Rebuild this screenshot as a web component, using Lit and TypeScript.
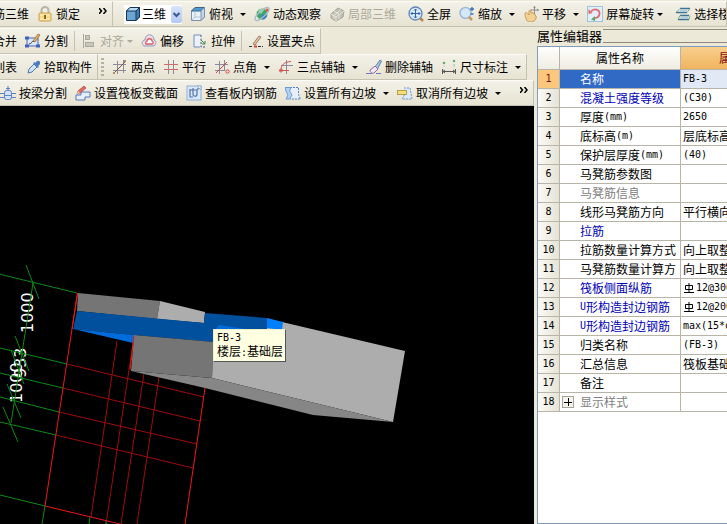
import { LitElement, html, svg, css, nothing, type TemplateResult } from "lit";
import { customElement } from "lit/decorators.js";
import { classMap } from "lit/directives/class-map.js";

const icons: Record<string, TemplateResult> = {
  lock: svg`<path d="M4.5 8V4.5a3.5 3.5 0 0 1 7 0V8" fill="none" stroke="#b9b4a6" stroke-width="2"/><rect x="2" y="7" width="12" height="8" rx="1" fill="#f6d98c" stroke="#cfa04a"/><path d="M3 9h10M3 13h10" stroke="#fdf0c4"/><rect x="7" y="9" width="2" height="4" fill="#8a6420"/>`,
  cube: svg`<path d="M1.5 5 5 1.5h9.5V11L11 14.5H1.5z" fill="#6ba6d4" stroke="#16355c"/><path d="M1.5 5H11L14.5 1.5H5z" fill="#b5dcf3" stroke="#16355c"/><path d="M11 5v9.5l3.500-3.500V1.500z" fill="#3f7db0" stroke="#16355c"/>`,
  topcube: svg`<path d="M1.500 5 5 1.500h9.500V11L11 14.500H1.500z" fill="#e9f1f8" stroke="#7b93ad"/><path d="M1.500 5H11L14.500 1.500H5z" fill="#4f9ad0" stroke="#3c6688"/><path d="M11 5v9.500l3.500-3.500V1.500z" fill="#c4d6e6" stroke="#7b93ad"/><path d="M5 6v5l-3 3M5 11h6" stroke="#b3c4d6" fill="none"/>`,
  orbit: svg`<circle cx="8" cy="8" r="5.500" fill="#3fa66a"/><path d="M4 5c2-3 5-2 6-1L7 8z" fill="#8fe0a8"/><path d="M8 9c3-2 5 0 5 1-1 3-4 4-6 3z" fill="#3a78c8"/><ellipse cx="8" cy="8" rx="9" ry="3" transform="rotate(-42 8 8)" fill="none" stroke="#a9bccd" stroke-width="1.300"/><circle cx="13" cy="4" r="1.500" fill="#e25c3a"/>`,
  local3d: svg`<path d="M2 8 9 2l6 3-1 6-7 4-5-3z" fill="#c2bfb4" stroke="#a5a297"/><path d="m2 8 5 3 8-6M7 11v4M5 5l5 3v5M12 3.500 5 9.500V13" stroke="#e9e6da" fill="none"/>`,
  full: svg`<circle cx="7.500" cy="7.500" r="6.500" fill="#dcebfb" stroke="#5d86bd" stroke-width="1.300"/><path d="m12 12 3 3" stroke="#b08a52" stroke-width="2.500"/><path d="M7.500 3v9M3 7.500h9M6 4.500 7.500 3 9 4.500M6 10.500 7.500 12 9 10.500M4.500 6 3 7.500 4.500 9M10.500 6 12 7.500 10.500 9" stroke="#2e62ad" fill="none"/>`,
  zoom: svg`<circle cx="6.500" cy="7" r="5.500" fill="#d5e8fa" stroke="#9fb8d6" stroke-width="1.500"/><path d="m10 11 3 3" stroke="#c79a5c" stroke-width="2.500"/><path d="M13 1v4M11 3h4M11.500 8h3" stroke="#3a70b5" stroke-width="1.300"/>`,
  pan: svg`<path d="M2 8c0-2 2-2 3 0l1 1V5c1-2 2-1 2 0v2c1-1 2-1 2 1 1-1 2 0 2 1l1 1c1 3-2 6-5 6H6c-2 0-4-5-4-8z" fill="#f3d193" stroke="#c39a5a"/><path d="M11.500 0v8M8 4h7.500M10.500 1.500l1-1 1 1M14 3l1.500 1L14 5" stroke="#8c8c88" fill="none"/>`,
  rotate: svg`<rect x=".5" y=".5" width="15" height="15" fill="#e2eff8" stroke="#9ec3dd"/><path d="M4 5.500c3-4 9-2 8.500 2.500-.5 3-3 4.500-5.500 4" fill="none" stroke="#e06a72" stroke-width="1.800"/><path d="M1.500 8V3l4 4z" fill="#e06a72"/><path d="M4 13.500 8 10v5z" fill="#58a868"/>`,
  floors: svg`<path d="M5 2.500h10M1 6.500h11M5 9.500h9M3 13.500h11" stroke="#3c7397" stroke-width="1.600"/><path d="M5 2.500 1 6.500M12 6.500l3-4M5 9.500l-2 4M14 13.500l1-4" stroke="#74b487"/><path d="M5 4.500h7M6 11.500h7" stroke="#a9cde8" stroke-width="1.500"/>`,
  split: svg`<rect x="2" y="5" width="11" height="8" fill="#dce8fb" stroke="#4867b5"/><path d="M0 3.500h4v3H0zM11 11.500h4v3h-4zM0 11.500h4v3H0z" fill="#3c62c0"/><path d="M4 11c3 0 2-3 5-3" stroke="#333" fill="none"/><path d="m8 8 5-7 2 1-5 7z" fill="#e8b860" stroke="#7c5c2c" stroke-width=".7"/>`,
  align: svg`<path d="M2.500 1v14" stroke="#aaa79b"/><rect x="4.500" y="2.500" width="4" height="4" fill="#c9c6ba" stroke="#aaa79b"/><rect x="4.500" y="9.500" width="8" height="4" fill="#c9c6ba" stroke="#aaa79b"/>`,
  offset: svg`<path d="M3 13c-3-1-2-6 1-6 0-7 9-7 9 0 3 1 2 6-1 6z" fill="#f3dcdf" stroke="#8e9bc4"/><path d="M5 11c-1-1 0-3 1-3 0-3 5-3 5 0 2 1 1 3 0 3z" fill="#fff" stroke="#d0606c" stroke-width="1.300"/>`,
  stretch: svg`<path d="M9 2H2v12h6" fill="#eef2f8" stroke="#6f8fc0"/><path d="M9 2v12h5" fill="none" stroke="#405a90" stroke-dasharray="2 1.500"/><path d="m9 7 4 4M13 11h-3M13 11V8" stroke="#3d8a55" fill="none"/>`,
  grip: svg`<path d="M1 13.500h4M10 13.500h5" stroke="#333" stroke-dasharray="3 1"/><path d="m5 11 6-8 2 1-6 8z" fill="#e9c2a4" stroke="#8c6c58" stroke-width=".8"/><path d="M6 13.500h3" stroke="#c94545" stroke-width="2"/>`,
  picker: svg`<path d="m3 14 1-4 5-5 3 3-5 5z" fill="#cfe4f8" stroke="#4d79ae"/><path d="m8 4 1.500-1 1 1c1-3 5-3 4.500 0 0 2-1 2-2 3l1 1L13 9z" fill="#4a7cbc"/>`,
  twopt: svg`<path d="M5.500 2v13M11.500 1v13M1 5.500h13M1 11.500h13" stroke="#8d8a9c"/><path d="M2 14 14 2" stroke="#7c5636"/><path d="M1 13h2v2H1zM12 1h2v2h-2z" fill="#b08e6d"/>`,
  parallel: svg`<path d="M5.500 1v14M10.500 1v14" stroke="#8b8ba0"/><path d="M1 5.500h14M1 10.500h14" stroke="#cf6a6a" stroke-width="1.200"/>`,
  angle: svg`<path d="M5.500 2v13M10.500 1v11M1 5.500h13M1 11.500h9" stroke="#8d8a9c"/><path d="m2 14 11-11" stroke="#c34848"/><circle cx="13.500" cy="12.500" r="1.700" fill="none" stroke="#d94545"/>`,
  arc: svg`<path d="M8.500 1v14M3 6.500h12" stroke="#8d8a9c"/><path d="M1 11.500h10M3 11c0-5 3-8 10-8.500" stroke="#d25454" fill="none"/><circle cx="3" cy="11.500" r="1.500" fill="none" stroke="#d25454"/>`,
  brush: svg`<path d="m9 8 5-7 1.500 1-4 8z" fill="#a9c8e6" stroke="#4c6c9c" stroke-width=".8"/><path d="m4 11 5-4 3 3-4 4c-2 1-4-1-4-3z" fill="#efe4f4" stroke="#8a6ca5"/><path d="M0 14.500h6M10 14.500h5" stroke="#6a7fc0"/>`,
  dims: svg`<path d="M1.500 10v5M14.500 10v5M1 12.500h14M4 11l-2 1.500L4 14M12 11l2 1.500-2 1.500" stroke="#555" fill="none"/><circle cx="3" cy="4" r="1.300" fill="#64b070"/><circle cx="13" cy="2" r="1.300" fill="#64b070"/><path d="M13 5v3M3 8V7" stroke="#9dc8a3"/>`,
  beam: svg`<path d="M0 8.500h16M0 12.500h16" stroke="#5e83c2"/><rect x="4.500" y="5.500" width="7" height="9" rx="2" fill="#d2e2f8" stroke="#5e83c2"/><path d="M8 1v5M6 3.500h4M4 10.500h8" stroke="#5e83c2"/>`,
  section: svg`<path d="M1 10h5V7h9v5h-5v3H1z" fill="#e6effc" stroke="#5476bd"/><path d="m2 9 1-3 6-5 2 2-6 5z" fill="#e8695f" stroke="#a54545" stroke-width=".7"/><path d="m2 9 1-3 2 2z" fill="#f7d9a8"/>`,
  rebar: svg`<rect x="1" y="1" width="14" height="14" fill="#d9e9fa" stroke="#8fb0d6"/><path d="M4 4v8h3M4 5h7v4c0 3-4 3-4 0V3M12 3v2" fill="none" stroke="#5272ac" stroke-width="1.200"/><path d="m11 1 4 4V1z" fill="#fff" stroke="#8fb0d6"/>`,
  slope: svg`<path d="M5 2.500h8.500v7l2 4.500H5" fill="#e6effa" stroke="#4e80c6" stroke-dasharray="2 1"/><path d="M0 2.500h6L4.500 6 7 10l-2.500 4H1l2-4-2-4z" fill="#b4d4f5" stroke="#6e9ad2"/>`,
  unslope: svg`<path d="M7 3h6l2 11H5l3-5" fill="#dceafa" stroke="#6f97cf" stroke-dasharray="2 1"/><rect x=".5" y="5.500" width="9" height="4" fill="#f5e07a" stroke="#b59f4d"/>`,
};

const icon = (name: string) => html`<svg class="icon" viewBox="0 0 16 16" aria-hidden="true">${icons[name]}</svg>`;

interface Tool { i?: string; t: string; menu?: boolean; off?: boolean; tight?: boolean }

const tool = (o: Tool) => html`<button class=${classMap({ tool: true, tight: !!o.tight })} ?disabled=${!!o.off}>
  ${o.i ? icon(o.i) : nothing}<span>${o.t}</span>${o.menu ? html`<i class="caret"></i>` : nothing}</button>`;
const sep = html`<span class="sep"></span>`;
const more = html`<button class="more" aria-label="更多"><svg width="8" height="6" viewBox="0 0 8 6"><path d="M0 0 2.500 3 0 6M4.500 0 7 3 4.500 6" fill="none" stroke="#000" stroke-width="1.500"/></svg></button>`;

/** Sets Latin runs in the half-width face used beside the ideographs. */
const mixed = (s: string) => s.split(/([\x20-\x7e]+)/).map((p, i) => (i % 2 ? html`<span class="half">${p}</span>` : p));

const barMark = html`<svg class="bar-mark" viewBox="0 0 12 12" role="img" aria-label="Φ"><path d="M6 1v10M2.500 3.500h7v4h-7zM1 10.500h10" fill="none" stroke="#000"/></svg>`;

interface Prop { n: string; v?: string; k?: "link" | "mute" | "sel"; bar?: boolean; open?: boolean }

const props: Prop[] = [
  { n: "名称", v: "FB-3", k: "sel" },
  { n: "混凝土强度等级", v: "(C30)", k: "link" },
  { n: "厚度(mm)", v: "2650" },
  { n: "底标高(m)", v: "层底标高" },
  { n: "保护层厚度(mm)", v: "(40)" },
  { n: "马凳筋参数图" },
  { n: "马凳筋信息", k: "mute" },
  { n: "线形马凳筋方向", v: "平行横向" },
  { n: "拉筋", k: "link" },
  { n: "拉筋数量计算方式", v: "向上取整+1" },
  { n: "马凳筋数量计算方", v: "向上取整+1" },
  { n: "筏板侧面纵筋", v: "12@300", k: "link", bar: true },
  { n: "U形构造封边钢筋", v: "12@200", k: "link", bar: true },
  { n: "U形构造封边钢筋", v: "max(15*d,200)", k: "link" },
  { n: "归类名称", v: "(FB-3)" },
  { n: "汇总信息", v: "筏板基础" },
  { n: "备注" },
  { n: "显示样式", k: "mute", open: true },
];

@customElement("model-view")
class ModelView extends LitElement {
  static styles = css`
    :host { display: block; position: relative; background: #000; overflow: hidden; min-height: 400px; }
    .scene { position: absolute; inset: 0; width: 100%; height: 100%; }
    .axis { stroke: #0c8a14; }
    .edge { stroke: #f01818; }
    .grid { stroke: #a00c0c; }
    .dim { fill: #fff; font: 16px "DejaVu Sans", sans-serif; }
    .tip {
      position: absolute; left: 213px; top: 223px; box-sizing: border-box; padding: 1px 2px 2px 3px;
      background: #ffffe1; border: 1px solid #eeeec8; border-right-color: #555; border-bottom-color: #555;
      font: 12px/13px "Noto Sans CJK SC", sans-serif; white-space: nowrap;
    }
    .half { font: 10px/13px "DejaVu Sans Mono", monospace; }
  `;
  render() {
    return html`
      <svg class="scene" viewBox="0 106 534 418" preserveAspectRatio="xMinYMin slice">
        <path class="grid" fill="none" d="M67 364 204 397M63 388 200 421M59 412 197 444M56 435 193 468M117 341 91 517M133 343 106 524M144 373 121 524M159 377 137 524"/>
        <path class="edge" fill="none" d="M77.500 293 45 506 120 524M205 388 185 524"/>
        <path fill="#757575" d="M78 293 160 301 157 319 77 311z"/>
        <path fill="#adadad" d="M160 301 205 312 204 323 157 319z"/>
        <path fill="#adadad" d="M282 322 405 351 393 422 212 378 213 340z"/>
        <path fill="#868686" d="M131 371 212 378 393 422 313 415 205 388z"/>
        <path fill="#00509e" d="M77 311 204 323 205 313 267 318 267 345 213 342 134 335 73 329z"/>
        <path fill="#006cdb" d="M73 329 134 335 133 343zM219 325 252 330H215z"/>
        <path fill="#0080ff" d="M267 318 283 322 282 330 267 328z"/>
        <path fill="#757575" d="M134 335 214 342 212 378 131 371z"/>
        <path class="edge" fill="none" d="M77.500 293 72 329M134 336 130 370"/>
        <text class="dim" transform="translate(33 333) rotate(-90)">1000</text>
        <text class="dim" transform="translate(22 403) rotate(-90)">1000</text>
        <text class="dim" transform="translate(26 378) rotate(-90)">933</text>
        <path class="axis" fill="none" d="M0 274.300 77 293M0 348 67 364M0 373 63 388M0 397 59 412M0 422 56 435M0 495 45 506M45 506 42 524M90 517 89 524M106 521v3M33 283 11 423M26 265 39 299M15 336 29 371M11 350 24 384M7 384 21 418M3 407 18 442"/>
      </svg>
      <div class="tip" role="tooltip"><div class="half">FB-3</div><div>楼层<span class="half">:</span>基础层</div></div>`;
  }
}

@customElement("property-panel")
class PropertyPanel extends LitElement {
  static styles = css`
    :host { display: flex; flex-direction: column; box-sizing: border-box; padding-left: 3px; overflow: hidden; font: 12px/18px "Noto Sans CJK SC", sans-serif; background: #ece9d8; }
    .title { display: flex; align-items: center; height: 16px; line-height: 14px; margin: 0 0 2px; font-size: 13px; font-weight: 400; white-space: nowrap; flex: none; }
    .title::after { content: ""; flex: 1; height: 12px; border: solid #8d8a7d; border-width: 1px 0; margin-left: 1px; }
    .frame { flex: 1; border: 1px solid #7f9db9; border-right: 0; background: #fff; overflow: hidden; }
    table { border-collapse: separate; border-spacing: 0; table-layout: fixed; width: 256px; }
    .c-num { width: 22px; } .c-name { width: 121px; } .c-val { width: 113px; }
    th, td { box-sizing: border-box; height: 19px; padding: 0; border-right: 1px solid #b8b5a8; border-bottom: 1px solid #b8b5a8; font-weight: 400; white-space: nowrap; overflow: hidden; text-align: left; }
    thead th { height: 23px; text-align: center; background: linear-gradient(#fefefd, #efede2); }
    thead .on { background: linear-gradient(#f8cf8e, #f0b45e); color: #7a1010; }
    tbody th { text-align: center; background: linear-gradient(90deg, #fbfaf6, #e6e3d6); }
    .name { padding-left: 2px; }
    .val { padding-left: 2px; }
    .slot { display: inline-flex; width: 18px; vertical-align: top; height: 18px; align-items: center; }
    .plus { box-sizing: border-box; width: 12px; height: 12px; padding: 0; border: 1px solid #a5a296; background: #f5f4ee; display: flex; }
    .half { font: 10px/18px "DejaVu Sans Mono", monospace; vertical-align: top; }
    .link .name { color: #0000b4; }
    .mute .name { color: #808080; }
    .sel .name { background: #316ac5; color: #fff; }
    .sel .val { background: #e1e9f6; }
    .sel th { background: #fbc77c; color: #7a1010; }
    .bar-mark { width: 12px; height: 12px; margin: 3px 1px 0 0; vertical-align: top; }
  `;
  render() {
    return html`
      <h2 class="title">属性编辑器</h2>
      <div class="frame"><table>
        <colgroup><col class="c-num"><col class="c-name"><col class="c-val"></colgroup>
        <thead><tr><th></th><th scope="col">属性名称</th><th scope="col" class="on">属性值</th></tr></thead>
        <tbody>${props.map((p, i) => html`<tr class=${p.k ?? ""}>
          <th scope="row"><span class="half">${i + 1}</span></th>
          <td class="name"><span class="slot">${p.open ? html`<button class="plus" aria-label="展开"><svg width="10" height="10"><path d="M1 5.500h8M5.500 1v8" stroke="#000"/></svg></button>` : nothing}</span>${mixed(p.n)}</td>
          <td class="val">${p.bar ? barMark : nothing}${mixed(p.v ?? "")}</td>
        </tr>`)}</tbody>
      </table></div>`;
  }
}

@customElement("app-root")
class AppRoot extends LitElement {
  static styles = css`
    :host { display: flex; flex-direction: column; min-height: 100vh; background: #ece9d8; overflow: hidden; font: 12px/16px "Noto Sans CJK SC", sans-serif; color: #000; }
    .row { display: flex; height: 26px; overflow: hidden; }
    .top { height: 28px; box-sizing: border-box; padding-top: 1px; }
    .body { flex: 1; display: flex; min-width: 0; }
    .left { flex: 1; min-width: 0; display: flex; flex-direction: column; }
    model-view { flex: 1; }
    property-panel { flex: 0 0 193px; }
    .bar { display: flex; align-items: center; gap: 8px; flex: none; box-sizing: border-box; padding: 0 5px 0 3px; height: 26px; white-space: nowrap;
      background: linear-gradient(#f3f1e8, #ece9db 60%, #e6e3d2); border: 1px solid #fbfaf5; border-width: 1px 1px 1px 0; border-bottom-color: #c5c2b2; border-right-color: #c5c2b2; }
    .flush { padding-left: 0; }
    .cut { padding-left: 0; }
    .cut > :first-child { margin-left: -7px; }
    .fill { flex: 1; min-width: 0; overflow: hidden; }
    .tool { display: flex; align-items: center; gap: 3px; flex: none; padding: 0; border: 0; background: none; font: inherit; color: inherit; }
    .tool:disabled { color: #aca899; }
    .icon { width: 16px; height: 16px; flex: none; }
    .caret { width: 0; border: 3px solid transparent; border-top-color: currentColor; border-bottom: 0; margin-left: 4px; }
    .tight .caret { margin-left: 0; }
    .sep { width: 1px; height: 20px; background: #c5c2b2; margin: 0 -2px; }
    .handle { width: 3px; height: 18px; background: repeating-linear-gradient(#b5b2a0 0 2px, transparent 2px 4px); }
    .more { align-self: flex-start; padding: 6px 0 0; border: 0; background: none; display: flex; margin-left: 11px; }
    .flush .more { margin-left: auto; }
    .combo { display: flex; align-items: center; gap: 1px; background: #fff; height: 19px; padding-left: 1px; }
    .combo select { appearance: none; border: 0; padding: 0; margin: 0; background: none; font: inherit; color: inherit; width: 28px; }
    .drop { width: 11px; height: 17px; background: linear-gradient(#d7e3fb, #b4caf5); border-radius: 2px; }
  `;
  render() {
    return html`
      <div class="row top" role="toolbar">
        <div class="bar cut">${tool({ t: "筋三维" })}${tool({ i: "lock", t: "锁定" })}${more}</div>
        <div class="bar fill"><span class="handle"></span>
          <label class="combo">${icon("cube")}<select aria-label="视图"><option>三维</option></select>
            <svg class="drop" viewBox="0 0 11 17"><path d="m2.500 7 3 3 3-3" fill="none" stroke="#3a5a90" stroke-width="2"/></svg></label>
          ${tool({ i: "topcube", t: "俯视", menu: true })}${tool({ i: "orbit", t: "动态观察" })}${tool({ i: "local3d", t: "局部三维", off: true })}${sep}
          ${tool({ i: "full", t: "全屏" })}${tool({ i: "zoom", t: "缩放", menu: true })}${tool({ i: "pan", t: "平移", menu: true })}${tool({ i: "rotate", t: "屏幕旋转", menu: true, tight: true })}${sep}
          ${tool({ i: "floors", t: "选择楼层" })}
        </div>
      </div>
      <div class="body">
        <div class="left">
          <div class="row" role="toolbar"><div class="bar cut">
            ${tool({ t: "合并" })}${tool({ i: "split", t: "分割" })}${sep}${tool({ i: "align", t: "对齐", menu: true, off: true, tight: true })}
            ${tool({ i: "offset", t: "偏移" })}${tool({ i: "stretch", t: "拉伸" })}${sep}${tool({ i: "grip", t: "设置夹点" })}
          </div></div>
          <div class="row" role="toolbar">
            <div class="bar cut">${tool({ t: "列表" })}${tool({ i: "picker", t: "拾取构件" })}</div>
            <div class="bar"><span class="handle"></span>
              ${tool({ i: "twopt", t: "两点" })}${tool({ i: "parallel", t: "平行" })}${tool({ i: "angle", t: "点角", menu: true })}${tool({ i: "arc", t: "三点辅轴", menu: true })}
              ${tool({ i: "brush", t: "删除辅轴" })}${tool({ i: "dims", t: "尺寸标注", menu: true })}
            </div>
          </div>
          <div class="row" role="toolbar"><div class="bar flush fill">
            ${tool({ i: "beam", t: "按梁分割" })}${tool({ i: "section", t: "设置筏板变截面" })}${tool({ i: "rebar", t: "查看板内钢筋" })}
            ${tool({ i: "slope", t: "设置所有边坡", menu: true })}${tool({ i: "unslope", t: "取消所有边坡", menu: true })}${more}
          </div></div>
          <model-view></model-view>
        </div>
        <property-panel></property-panel>
      </div>`;
  }
}
